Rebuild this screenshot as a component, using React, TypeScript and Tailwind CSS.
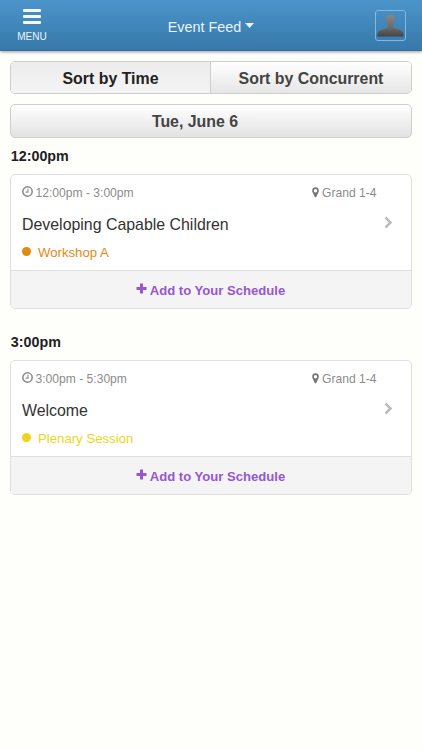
interface Session {
  start: string;
  time: string;
  place: string;
  title: string;
  track: string;
  tone: string;
}

const sessions: Session[] = [
  { start: '12:00pm', time: '12:00pm - 3:00pm', place: 'Grand 1-4', title: 'Developing Capable Children', track: 'Workshop A', tone: 'text-[#e28a12]' },
  { start: '3:00pm', time: '3:00pm - 5:30pm', place: 'Grand 1-4', title: 'Welcome', track: 'Plenary Session', tone: 'text-[#edd51c]' },
];

function ClockIcon() {
  return (
    <svg viewBox="0 0 12 12" className="mb-[3px] h-[11px] w-[11px]" fill="none" stroke="currentColor">
      <circle cx="6" cy="6" r="5.1" strokeWidth="1.7" />
      <path d="M6.500 3v3.700H3.900" strokeWidth="1.2" />
    </svg>
  );
}

function PinIcon() {
  return (
    <svg viewBox="0 0 8 12" className="mb-[2px] h-[11px] w-[7px]" fill="#777" preserveAspectRatio="none">
      <path fillRule="evenodd" d="M4 .3A3.800 3.800 0 0 0 .2 4.100c0 .7.1 1.100.4 1.700l2.500 5.200c.3.700 1.500.700 1.800 0l2.500-5.200c.3-.600.4-1 .4-1.700A3.800 3.800 0 0 0 4 .3Zm0 1.900a1.900 1.900 0 1 1 0 3.800 1.900 1.900 0 0 1 0-3.800Z" />
    </svg>
  );
}

function Avatar() {
  return (
    <svg viewBox="0 0 27 24" className="h-[23px] w-[27px]" preserveAspectRatio="none">
      <defs>
        <linearGradient id="person" x1="0" y1="0" x2="0" y2="1">
          <stop offset="0" stopColor="#8b8889" />
          <stop offset="0.6" stopColor="#6c6869" />
          <stop offset="1" stopColor="#454344" />
        </linearGradient>
      </defs>
      <path fill="url(#person)" d="M13.500.5C10.500.5 9 2.700 9 5.800c0 2.600.8 4.600 1.800 6v1.500c0 .8-.7 1.200-1.600 1.500l-5 1.800C1.600 17.600.3 19 .3 23.500h26.400c0-4.500-1.300-5.900-3.900-6.900l-5-1.800c-.9-.3-1.600-.7-1.600-1.500v-1.500c1-1.400 1.800-3.400 1.800-6C18 2.700 16.500.5 13.500.5Z" />
    </svg>
  );
}

function SessionCard({ session }: { session: Session }) {
  return (
    <section className="h-[186px]">
      <h2 className="h-[27px] pl-[0.8px] text-[14.3px] leading-[18px] font-bold text-[#222]">{session.start}</h2>
      <article className="h-[135px] overflow-hidden rounded-[5px] border border-[#dedfe0] bg-white">
        <div className="flex h-24 border-b border-[#dedfe0] pl-[11px]">
          <div className="flex-1">
            <div className="mt-[10px] flex h-4 items-center gap-[2.5px] text-[12.1px] leading-4 text-[#8c8c8c]">
              <ClockIcon />
              <span>{session.time}</span>
            </div>
            <h3 className="mt-[14px] text-[15.9px] leading-5 text-[#333]">{session.title}</h3>
            <div className={`mt-[9px] flex items-center gap-[7px] text-[13.2px] leading-4 ${session.tone}`}>
              <span className="mb-[2px] h-[9px] w-[9px] rounded-full bg-current" />
              <span className="pt-px">{session.track}</span>
            </div>
          </div>
          <div className="w-[99px]">
            <div className="mt-[10px] flex h-4 items-center gap-[3px] text-[12.1px] leading-4 text-[#8c8c8c]">
              <PinIcon />
              <span>{session.place}</span>
            </div>
            <svg viewBox="0 0 9 12" className="mt-[15px] ml-[71.500px] h-[13px] w-[9px]" fill="none" stroke="#bcbcbc" strokeWidth="2.500">
              <path d="m1.500 1 5 5-5 5" />
            </svg>
          </div>
        </div>
        <button className="flex h-[38px] w-full items-center justify-center gap-[3px] bg-[#f4f4f5] pt-px pr-px text-[13.100px] font-bold text-[#9757d0]">
          <svg viewBox="0 0 11 11" className="mb-[4px] h-[11px] w-[11px]" fill="currentColor">
            <path d="M4 .5h3V4h3.500v3H7v3.500H4V7H.5V4H4Z" />
          </svg>
          Add to Your Schedule
        </button>
      </article>
    </section>
  );
}

export default function App() {
  return (
    <div className="min-h-[750px] w-full bg-[#fefffa] font-['Liberation_Sans',Arial,sans-serif]">
      <header className="grid h-[51px] grid-cols-[64px_1fr_64px] border-b border-[#306f9f] bg-linear-to-b from-[#4b94ca] to-[#3779aa] text-[#eaf4fb] shadow-[0_1px_3px_rgba(0,0,0,0.4)]">
        <button className="flex flex-col items-center pt-[9px]">
          <span className="flex w-[18px] flex-col gap-[3px]">
            <span className="h-[3px] rounded-[1px] bg-[#f2f8fc]" />
            <span className="h-[3px] rounded-[1px] bg-[#f2f8fc]" />
            <span className="h-[3px] rounded-[1px] bg-[#f2f8fc]" />
          </span>
          <span className="mt-[7px] text-[10px] leading-3">MENU</span>
        </button>
        <button className="flex items-center justify-center gap-1 pt-[3px] text-[14.4px] leading-5">
          Event Feed
          <svg viewBox="0 0 9 5" className="mb-[2px] h-[5px] w-[9px]" fill="currentColor"><path d="M0 0h9L4.500 5Z" /></svg>
        </button>
        <div className="pt-[10px] pl-[17px]">
          <div className="flex h-[31px] w-[31px] items-end justify-center rounded-[3px] border border-[#83b8df] pb-[3px]">
            <Avatar />
          </div>
        </div>
      </header>
      <main className="px-[10px] pt-[10px]">
        <div className="flex h-[33px] overflow-hidden rounded-[5px] border border-[#cdcece] text-base font-bold">
          <button className="w-[200px] border-r border-[#cdcece] bg-linear-to-b from-[#ececec] to-[#f4f4f4] pt-[3px] text-[15.900px] text-[#222]">Sort by Time</button>
          <button className="flex-1 bg-linear-to-b from-white to-[#e6e6e6] pt-[3px] text-[15.900px] text-[#444]">Sort by Concurrent</button>
        </div>
        <button className="mt-[10px] block h-[34px] w-full rounded-[5px] border border-[#cdcece] bg-linear-to-b from-white to-[#e2e2e3] pt-[2px] pr-8 text-center text-[15.900px] font-bold text-[#444]">Tue, June 6</button>
        <div className="pt-[9px]">
          {sessions.map((session) => <SessionCard key={session.start} session={session} />)}
        </div>
      </main>
    </div>
  );
}
